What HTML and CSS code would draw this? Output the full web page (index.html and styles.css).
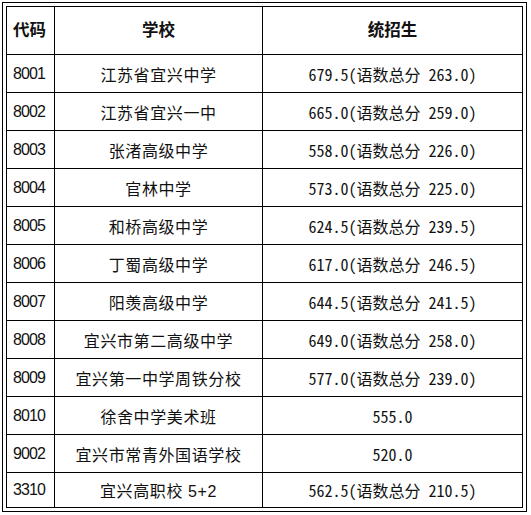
FILE: index.html
```html
<!DOCTYPE html>
<html lang="zh-CN">
<head>
<meta charset="utf-8">
<title>统招生分数线</title>
<link rel="stylesheet" href="styles.css">
</head>
<body>
<div class="frame">
  <table class="scores">
    <colgroup>
      <col class="c-code">
      <col class="c-school">
      <col class="c-score">
    </colgroup>
    <thead>
      <tr>
        <th class="code">代码</th>
        <th>学校</th>
        <th>统招生</th>
      </tr>
    </thead>
    <tbody>
      <tr><td class="code">8001</td><td class="school">江苏省宜兴中学</td><td class="score">679.5(语数总分 263.0)</td></tr>
      <tr><td class="code">8002</td><td class="school">江苏省宜兴一中</td><td class="score">665.0(语数总分 259.0)</td></tr>
      <tr><td class="code">8003</td><td class="school">张渚高级中学</td><td class="score">558.0(语数总分 226.0)</td></tr>
      <tr><td class="code">8004</td><td class="school">官林中学</td><td class="score">573.0(语数总分 225.0)</td></tr>
      <tr><td class="code">8005</td><td class="school">和桥高级中学</td><td class="score">624.5(语数总分 239.5)</td></tr>
      <tr><td class="code">8006</td><td class="school">丁蜀高级中学</td><td class="score">617.0(语数总分 246.5)</td></tr>
      <tr><td class="code">8007</td><td class="school">阳羡高级中学</td><td class="score">644.5(语数总分 241.5)</td></tr>
      <tr><td class="code">8008</td><td class="school">宜兴市第二高级中学</td><td class="score">649.0(语数总分 258.0)</td></tr>
      <tr><td class="code">8009</td><td class="school">宜兴第一中学周铁分校</td><td class="score">577.0(语数总分 239.0)</td></tr>
      <tr><td class="code">8010</td><td class="school">徐舍中学美术班</td><td class="score">555.0</td></tr>
      <tr><td class="code">9002</td><td class="school">宜兴市常青外国语学校</td><td class="score">520.0</td></tr>
      <tr class="last"><td class="code">3310</td><td class="school">宜兴高职校 5+2</td><td class="score">562.5(语数总分 210.5)</td></tr>
    </tbody>
  </table>
</div>
</body>
</html>
```

FILE: styles.css
```css
* {
  box-sizing: border-box;
}

html, body {
  margin: 0;
  padding: 0;
  background: #ffffff;
}

body {
  color: #111111;
  font-family: "Liberation Sans", "Noto Sans CJK SC", sans-serif;
}

.frame {
  width: 525px;
  margin: 2px 0 0 2px;
  border: 1px solid #000000;
  padding: 3px;
}

.scores {
  width: 517px;
  table-layout: fixed;
  border-collapse: separate;
  border-spacing: 0;
  border-left: 1px solid #000000;
  border-top: 1px solid #000000;
}

.c-code { width: 48px; }
.c-school { width: 208px; }
.c-score { width: 260px; }

.scores th,
.scores td {
  border-right: 1px solid #000000;
  border-bottom: 1px solid #000000;
  padding: 0;
  text-align: center;
  vertical-align: middle;
  white-space: nowrap;
}

.scores th {
  height: 48px;
  font-family: "Noto Sans CJK SC", sans-serif;
  font-weight: 700;
  font-size: 16.5px;
  padding-bottom: 3px;
}

.scores td {
  height: 38px;
}

.scores tr.last td {
  height: 35px;
}

.scores .code {
  text-align: left;
  padding-left: 6px;
}

.scores td.code {
  font-family: "Liberation Sans", sans-serif;
  font-size: 16px;
  letter-spacing: -0.9px;
}

.scores td.school {
  font-family: "Liberation Sans", "Noto Sans CJK SC", sans-serif;
  font-size: 16px;
  letter-spacing: 0.6px;
}

.scores td.score {
  font-family: "Noto Sans Mono CJK SC", "DejaVu Sans Mono", "Noto Sans CJK SC", monospace;
  font-size: 16px;
}
```
